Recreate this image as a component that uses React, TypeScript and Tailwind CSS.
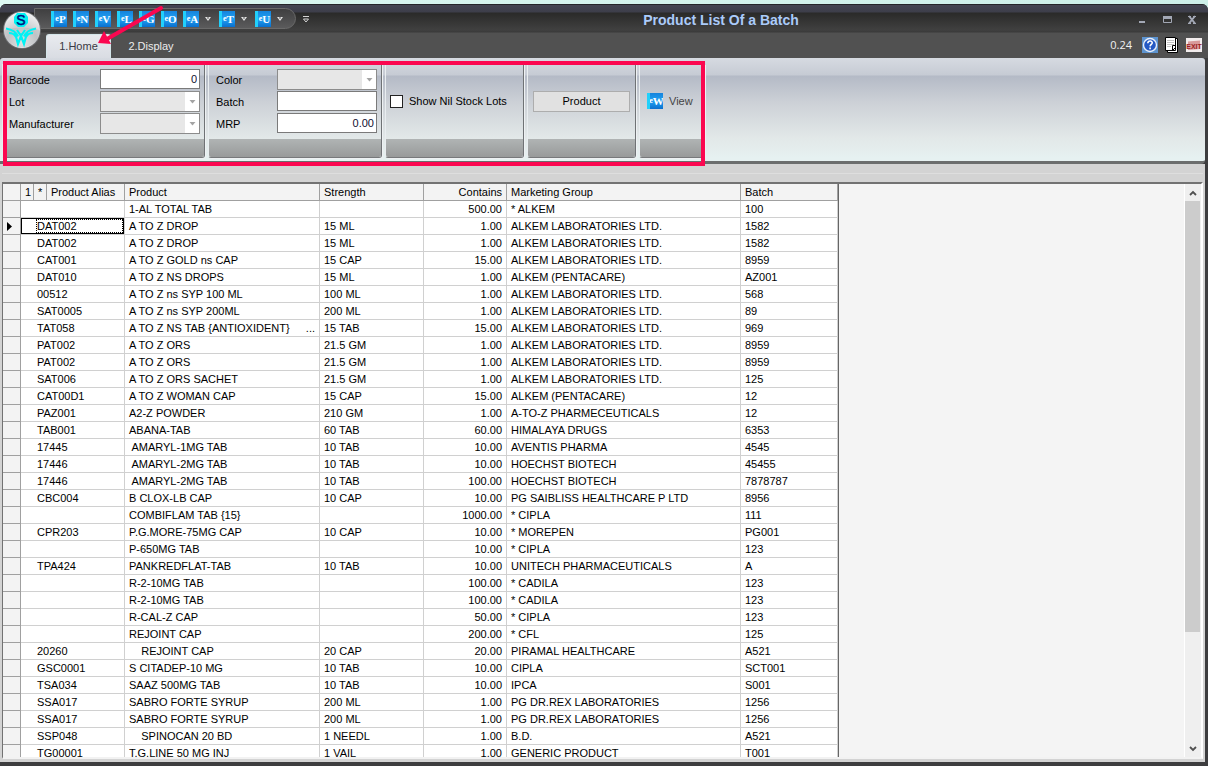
import React from 'react';

type Row = [string, string, string, string, string, string];

const rows: Row[] = [
  ['', '1-AL TOTAL TAB', '', '500.00', '* ALKEM', '100'],
  ['DAT002', 'A TO Z DROP', '15 ML', '1.00', 'ALKEM LABORATORIES LTD.', '1582'],
  ['DAT002', 'A TO Z DROP', '15 ML', '1.00', 'ALKEM LABORATORIES LTD.', '1582'],
  ['CAT001', 'A TO Z GOLD ns CAP', '15 CAP', '15.00', 'ALKEM LABORATORIES LTD.', '8959'],
  ['DAT010', 'A TO Z NS DROPS', '15 ML', '1.00', 'ALKEM (PENTACARE)', 'AZ001'],
  ['00512', 'A TO Z ns SYP 100 ML', '100 ML', '1.00', 'ALKEM LABORATORIES LTD.', '568'],
  ['SAT0005', 'A TO Z ns SYP 200ML', '200 ML', '1.00', 'ALKEM LABORATORIES LTD.', '89'],
  ['TAT058', 'A TO Z NS TAB {ANTIOXIDENT}', '15 TAB', '15.00', 'ALKEM LABORATORIES LTD.', '969'],
  ['PAT002', 'A TO Z ORS', '21.5 GM', '1.00', 'ALKEM LABORATORIES LTD.', '8959'],
  ['PAT002', 'A TO Z ORS', '21.5 GM', '1.00', 'ALKEM LABORATORIES LTD.', '8959'],
  ['SAT006', 'A TO Z ORS SACHET', '21.5 GM', '1.00', 'ALKEM LABORATORIES LTD.', '125'],
  ['CAT00D1', 'A TO Z WOMAN CAP', '15 CAP', '15.00', 'ALKEM (PENTACARE)', '12'],
  ['PAZ001', 'A2-Z POWDER', '210 GM', '1.00', 'A-TO-Z PHARMECEUTICALS', '12'],
  ['TAB001', 'ABANA-TAB', '60 TAB', '60.00', 'HIMALAYA DRUGS', '6353'],
  ['17445', ' AMARYL-1MG TAB', '10 TAB', '10.00', 'AVENTIS PHARMA', '4545'],
  ['17446', ' AMARYL-2MG TAB', '10 TAB', '10.00', 'HOECHST BIOTECH', '45455'],
  ['17446', ' AMARYL-2MG TAB', '10 TAB', '100.00', 'HOECHST BIOTECH', '7878787'],
  ['CBC004', 'B CLOX-LB CAP', '10 CAP', '10.00', 'PG SAIBLISS HEALTHCARE P LTD', '8956'],
  ['', 'COMBIFLAM TAB {15}', '', '1000.00', '* CIPLA', '111'],
  ['CPR203', 'P.G.MORE-75MG CAP', '10 CAP', '10.00', '* MOREPEN', 'PG001'],
  ['', 'P-650MG TAB', '', '10.00', '* CIPLA', '123'],
  ['TPA424', 'PANKREDFLAT-TAB', '10 TAB', '10.00', 'UNITECH PHARMACEUTICALS', 'A'],
  ['', 'R-2-10MG TAB', '', '100.00', '* CADILA', '123'],
  ['', 'R-2-10MG TAB', '', '100.00', '* CADILA', '123'],
  ['', 'R-CAL-Z CAP', '', '50.00', '* CIPLA', '123'],
  ['', 'REJOINT CAP', '', '200.00', '* CFL', '125'],
  ['20260', '    REJOINT CAP', '20 CAP', '20.00', 'PIRAMAL HEALTHCARE', 'A521'],
  ['GSC0001', 'S CITADEP-10 MG', '10 TAB', '10.00', 'CIPLA', 'SCT001'],
  ['TSA034', 'SAAZ 500MG TAB', '10 TAB', '10.00', 'IPCA', 'S001'],
  ['SSA017', 'SABRO FORTE SYRUP', '200 ML', '1.00', 'PG DR.REX LABORATORIES', '1256'],
  ['SSA017', 'SABRO FORTE SYRUP', '200 ML', '1.00', 'PG DR.REX LABORATORIES', '1256'],
  ['SSP048', '    SPINOCAN 20 BD', '1 NEEDL', '1.00', 'B.D.', 'A521'],
  ['TG00001', 'T.G.LINE 50 MG INJ', '1 VAIL', '1.00', 'GENERIC PRODUCT', 'T001'],
];

const selectedRow = 1;

function BookIcon({ letter }: { letter: string }) {
  return (
    <span className="flex h-4 w-4 shrink-0 items-center justify-center overflow-hidden border-l-[3px] border-[#22d0fb] bg-linear-to-b from-[#1583dc] via-[#22a2f4] to-[#0a6fce] font-['Liberation_Serif',serif] text-[11px] leading-4 font-bold text-white">
      <span className="text-[8px]">e</span>
      {letter}
    </span>
  );
}

function MenuArrow() {
  return (
    <svg className="h-2 w-2" viewBox="0 0 8 8" aria-hidden="true">
      <path d="M1 2h6L4 6z" fill="#e4e4e4" />
      <path d="M3 2.5h2L4 4z" fill="#333" />
    </svg>
  );
}

const tools: { letter: string; menu?: boolean }[] = [
  { letter: 'P' },
  { letter: 'N' },
  { letter: 'V' },
  { letter: 'L' },
  { letter: 'G' },
  { letter: 'O' },
  { letter: 'A', menu: true },
  { letter: 'T', menu: true },
  { letter: 'U', menu: true },
];

function Orb() {
  return (
    <svg className="h-10 w-10" viewBox="0 0 40 40" role="img" aria-label="Application menu">
      <defs>
        <radialGradient id="orb" cx="50%" cy="85%" r="85%">
          <stop offset="0" stopColor="#ffffff" />
          <stop offset="0.5" stopColor="#c9cbce" />
          <stop offset="1" stopColor="#f3f3f3" />
        </radialGradient>
      </defs>
      <circle cx="20" cy="20" r="19" fill="#6d6f72" />
      <circle cx="20" cy="20" r="18" fill="url(#orb)" />
      <path d="M2.5 20c9-3 26-3 35 0a17.500 17.500 0 0 1-35 0z" fill="#b2b4b7" opacity="0.4" />
      <path d="M15 3h8l3 4v6l-4 4h-6l-4-4V7z" fill="#00f2f4" />
      <text x="19" y="15" textAnchor="middle" fontSize="14" fontFamily="Liberation Sans, sans-serif" fill="#00107c" stroke="#00107c" strokeWidth="0.5">
        S
      </text>
      <path
        d="M4 18.500c6 1 10 3 12 8M34 18.500c-6 1-10 3-12 8M7 23c4 0 6 2 7 4M31 23c-4 0-6 2-7 4M13 23l3 11 3-8 3 8 3-11M19 26l-4-6M19 26l4-6"
        fill="none"
        stroke="#00f2f4"
        strokeWidth="2.200"
      />
    </svg>
  );
}

function ComboBox({ id }: { id: string }) {
  return (
    <div className="relative w-[100px]">
      <select id={id} disabled className="h-[21px] w-full appearance-none border border-[#8c8c8c] bg-[#e7e7e7]" />
      <span className="pointer-events-none absolute top-px right-px flex h-[19px] w-[14px] items-center justify-center bg-white">
        <svg className="h-1 w-[7px]" viewBox="0 0 7 4" aria-hidden="true">
          <path d="M0.500 0h6L3.500 3.500z" fill="#a4a4a4" />
        </svg>
      </span>
    </div>
  );
}

function TextBox({ id, value }: { id: string; value?: string }) {
  return (
    <input
      id={id}
      type="text"
      defaultValue={value}
      className="h-5 w-[100px] border border-[#7a7a7a] bg-white px-[2px] text-right text-[#101030]"
    />
  );
}

function Group({ children, className }: { children: React.ReactNode; className: string }) {
  return (
    <section className={`flex shrink-0 flex-col rounded-b-[3px] border-x border-b border-l-[#e9edf0] border-r-[#6f7275] border-b-[#77797b] shadow-[1px_1px_0_#eef1f3] ${className}`}>
      <div className="flex-1">{children}</div>
      <div className="h-[18px] rounded-b-[2px] bg-linear-to-b from-[#b0b4b4] to-[#989a9a]" />
    </section>
  );
}

const field = 'flex h-[22px] items-start justify-between';
const fieldLabel = 'leading-[22px]';

export default function App() {
  return (
    <div className="flex h-screen flex-col overflow-hidden bg-linear-to-r from-[#dcf8f2] to-[#cdefe9] pt-1 font-['Liberation_Sans',Arial,sans-serif] text-[11px] text-black">
      <div className="relative flex min-h-0 flex-1 flex-col overflow-hidden rounded-t-md bg-[#3d3d3f]">
        <header className="flex h-[54px] shrink-0 border-t border-[#25252a] bg-[linear-gradient(to_bottom,#444552_0,#3d3e4a_7px,#2a2a29_8px,#404040_25px,#3a3a3a_27px,#515151_28px)]">
          <div className="z-10 flex w-[42px] shrink-0 justify-end pt-[5px]">
            <Orb />
          </div>
          <div className="flex min-w-0 flex-1 flex-col">
            <div className="flex h-[29px] items-center">
              <div className="-ml-2 flex h-[21px] items-center rounded-r-full border border-[#6a6a6a] bg-linear-to-b from-[#3f3f40] to-[#5b5b5c] pr-1 pl-4">
                {tools.map((tool) => (
                  <button
                    key={tool.letter}
                    type="button"
                    aria-label={tool.letter}
                    className={tool.menu ? 'flex w-9 items-center gap-[5px]' : 'flex w-[22px] items-center'}
                  >
                    <BookIcon letter={tool.letter} />
                    {tool.menu && <MenuArrow />}
                  </button>
                ))}
              </div>
              <button type="button" aria-label="Customize toolbar" className="ml-1">
                <svg className="h-3 w-3" viewBox="0 0 12 12" aria-hidden="true">
                  <path d="M3 3.500h6M3.500 6h5L6 9z" fill="none" stroke="#d4d4d4" />
                </svg>
              </button>
              <h1 className="flex-1 pr-1 pt-[3px] text-center text-[14px] leading-4 font-bold text-[#abcbfa]">
                Product List Of a Batch
              </h1>
              <div className="flex items-center gap-[9px] pr-2 text-[#a3a8b5]">
                <button type="button" aria-label="Minimize">
                  <svg className="h-4 w-4" viewBox="0 0 16 16"><path d="M5 11h6" stroke="currentColor" strokeWidth="2" /></svg>
                </button>
                <button type="button" aria-label="Maximize">
                  <svg className="h-4 w-4" viewBox="0 0 16 16">
                    <path d="M4 6.500h9" stroke="currentColor" strokeWidth="3" />
                    <path d="M4.500 6v5.500h8V6" fill="none" stroke="currentColor" />
                  </svg>
                </button>
                <button type="button" aria-label="Close">
                  <svg className="h-4 w-4" viewBox="0 0 16 16">
                    <path d="M5 5l6 7.500M11 5l-6 7.500" stroke="currentColor" strokeWidth="2" />
                    <path d="M4 5.500h3M9 5.500h3M4 12.500h3M9 12.500h3" stroke="currentColor" />
                  </svg>
                </button>
              </div>
            </div>
            <div className="flex flex-1 items-end justify-between">
              <nav className="flex items-end" aria-label="Ribbon tabs">
                <a href="#home" className="ml-1 flex h-6 w-[65px] items-center justify-center rounded-t-[3px] border-x border-t border-[#d5e6ea] bg-linear-to-b from-[#e9ebef] to-[#d9dce3] text-[#3a3a44]">
                  1.Home
                </a>
                <a href="#display" className="flex h-6 w-[80px] items-center justify-center text-[#ececec]">
                  2.Display
                </a>
              </nav>
              <div className="flex h-[26px] items-center gap-[6px] pr-[6px]">
                <span className="mr-1 font-['Open_Sans',sans-serif] text-[11px] text-[#f0f0f0]">0.24</span>
                <button type="button" aria-label="Help">
                  <svg className="h-4 w-4" viewBox="0 0 16 16">
                    <rect width="16" height="16" fill="#5d93cf" />
                    <circle cx="8" cy="8" r="7.200" fill="#e9f0fb" />
                    <circle cx="8" cy="8" r="5.800" fill="#2459c4" />
                    <path d="M5.800 6.200C6 3.200 10.400 3.400 10.200 6 10 7.400 8.200 7.600 8.100 9.400M8.100 10.600v1.600" fill="none" stroke="#fff" strokeWidth="1.600" />
                  </svg>
                </button>
                <button type="button" aria-label="Document">
                  <svg className="h-4 w-4" viewBox="0 0 16 16">
                    <path d="M3.500 1.500h10v14h-10z" fill="#fff" stroke="#000" />
                    <path d="M1.500 0.500h10v13h-10z" fill="#fff" stroke="#000" />
                    <path d="M3 3.500h7M3 5.500h7M3 7.500h7M3 9.500h4" stroke="#c3c3c3" />
                    <path d="M11.500 8.500h-3v5M8.500 13.500l3-3" fill="none" stroke="#000" />
                  </svg>
                </button>
                <button type="button" aria-label="Exit">
                  <svg className="h-4 w-4" viewBox="0 0 16 16">
                    <rect y="1" width="16" height="14" fill="#f2ecec" />
                    <path d="M2 4.500l12-1v8.500l-12 1z" fill="#d89a9a" />
                    <text x="8" y="11.500" textAnchor="middle" fontSize="7" fontWeight="bold" fontFamily="Liberation Sans, sans-serif" fill="#9c1f1f">
                      EXIT
                    </text>
                  </svg>
                </button>
              </div>
            </div>
          </div>
        </header>

        <div className="mr-[3px] shrink-0 rounded-t-[3px] rounded-br-[4px] border-b-[3px] border-[#6b6d6d] bg-[linear-gradient(to_bottom,#d6dae1_0,#c6cbd4_17px,#b4bac6_18px,#cdd1d7_45px,#e2e8e8_80px,#e6f1f1_100px)]">
          <div className="relative flex h-[103px] gap-[3px] pt-[6px] pb-[3px] pl-[2px]">
            <Group className="w-[203px]">
              <div className="pt-[5px] pr-1 pl-[6px]">
                <div className={field}>
                  <label htmlFor="barcode" className={fieldLabel}>Barcode</label>
                  <TextBox id="barcode" value="0" />
                </div>
                <div className={field}>
                  <label htmlFor="lot" className={fieldLabel}>Lot</label>
                  <ComboBox id="lot" />
                </div>
                <div className={field}>
                  <label htmlFor="manufacturer" className={fieldLabel}>Manufacturer</label>
                  <ComboBox id="manufacturer" />
                </div>
              </div>
            </Group>
            <Group className="w-[174px]">
              <div className="pt-[5px] pr-1 pl-[7px]">
                <div className={field}>
                  <label htmlFor="color" className={fieldLabel}>Color</label>
                  <ComboBox id="color" />
                </div>
                <div className={field}>
                  <label htmlFor="batch" className={fieldLabel}>Batch</label>
                  <TextBox id="batch" />
                </div>
                <div className={field}>
                  <label htmlFor="mrp" className={fieldLabel}>MRP</label>
                  <TextBox id="mrp" value="0.00" />
                </div>
              </div>
            </Group>
            <Group className="w-[139px]">
              <label className="flex h-[74px] items-center gap-[6px] pl-1">
                <input type="checkbox" className="h-[13px] w-[13px] appearance-none border border-[#222] bg-white" />
                Show Nil Stock Lots
              </label>
            </Group>
            <Group className="w-[109px]">
              <div className="flex h-[74px] items-center px-[5px]">
                <button type="button" className="h-[21px] w-full border border-[#adadad] bg-[#e1e1e1]">Product</button>
              </div>
            </Group>
            <Group className="w-[66px]">
              <button type="button" className="flex h-[74px] items-center gap-[6px] pl-[7px] text-[#444]">
                <BookIcon letter="W" />
                View
              </button>
            </Group>
            <div className="pointer-events-none absolute top-[3px] left-[3px] h-[105px] w-[702px] border-4 border-[#fb0750]" />
          </div>
        </div>

        <main className="mr-[3px] mb-1 flex min-h-0 flex-1 flex-col bg-[#d3d3d3] px-[2px] pb-[3px]">
          <div className="h-[10px] shrink-0 border-b border-[#dedede]" />
          <div className="mt-2 flex min-h-0 flex-1 border-t-2 border-r-2 border-b-2 border-l border-t-[#727272] border-r-white border-b-[#f2f2f2] border-l-[#727272] bg-[#f4f4f4]">
            <div className="min-w-0 flex-1 overflow-hidden">
              <table className="w-[836px] table-fixed border-separate border-spacing-0 border-r border-[#666] bg-white leading-4 whitespace-pre">
                <colgroup>
                  <col className="w-[18px]" />
                  <col className="w-[13px]" />
                  <col className="w-[13px]" />
                  <col className="w-[78px]" />
                  <col className="w-[195px]" />
                  <col className="w-[104px]" />
                  <col className="w-[83px]" />
                  <col className="w-[234px]" />
                  <col />
                </colgroup>
                <thead>
                  <tr className="bg-[#f3f3f3] text-left *:h-[17px] *:border-r *:border-b *:border-[#a0a0a0] *:px-1 *:font-normal">
                    <th aria-label="Row" />
                    <th>1</th>
                    <th>*</th>
                    <th>Product Alias</th>
                    <th>Product</th>
                    <th>Strength</th>
                    <th className="text-right">Contains</th>
                    <th>Marketing Group</th>
                    <th>Batch</th>
                  </tr>
                </thead>
                <tbody>
                  {rows.map(([alias, product, strength, contains, group, batch], i) => (
                    <tr key={i} className="*:h-[17px] *:border-r *:border-b *:border-[#d0d0d0] *:px-1 *:py-0">
                      <td className="border-[#a0a0a0]! bg-[#f3f3f3]">
                        {i === selectedRow && (
                          <svg className="h-[9px] w-[5px]" viewBox="0 0 5 9" aria-hidden="true">
                            <path d="M0 0l5 4.500L0 9z" />
                          </svg>
                        )}
                      </td>
                      {i === selectedRow ? (
                        <td colSpan={3} className="p-0!">
                          <div className="flex h-4 border border-black pl-[14px]">
                            <span className="flex-1 border border-dotted border-black leading-3">{alias}</span>
                          </div>
                        </td>
                      ) : (
                        <td colSpan={3} className="pl-4!">{alias}</td>
                      )}
                      <td>
                        <span className="flex justify-between">
                          <span>{product}</span>
                          {product.length > 26 && <span>...</span>}
                        </span>
                      </td>
                      <td>{strength}</td>
                      <td className="text-right">{contains}</td>
                      <td>{group}</td>
                      <td>{batch}</td>
                    </tr>
                  ))}
                </tbody>
              </table>
            </div>
            <div className="flex w-[17px] flex-col border-l border-white bg-[#efefef] pr-px">
              <button type="button" aria-label="Scroll up" className="flex h-[17px] items-center justify-center">
                <svg className="h-[6px] w-2" viewBox="0 0 8 6"><path d="M1 5l3-3 3 3" fill="none" stroke="#505050" strokeWidth="1.800" /></svg>
              </button>
              <div className="flex-1">
                <div className="h-4/5 bg-[#cccccc]" />
              </div>
              <button type="button" aria-label="Scroll down" className="flex h-[17px] items-center justify-center">
                <svg className="h-[6px] w-2" viewBox="0 0 8 6"><path d="M1 1l3 3 3-3" fill="none" stroke="#505050" strokeWidth="1.800" /></svg>
              </button>
            </div>
          </div>
        </main>
      </div>

      <svg className="pointer-events-none absolute top-[4px] left-[96px] z-20 h-[44px] w-[70px]" viewBox="0 0 70 44" aria-hidden="true">
        <path d="M65 4L11 35" stroke="#fb0750" strokeWidth="4" strokeLinecap="round" />
        <path d="M2 39L8 27L15 40Z" fill="#fb0750" />
      </svg>
    </div>
  );
}
